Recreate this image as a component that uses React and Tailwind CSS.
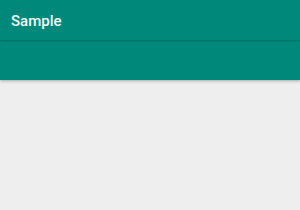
export default function App() {
  return (
    <div className="w-[300px] h-[210px] bg-[#eeeeee] overflow-hidden" style={{ fontFamily: "Roboto, 'Noto Sans', sans-serif" }}>
      <div className="bg-[#00897b] shadow-[0_1px_3px_rgba(0,0,0,0.3)] relative">
        <div className="h-[40px] flex items-center pl-[11px] pt-[2px] relative z-10 bg-[#00897b] shadow-[0_1px_2px_rgba(0,0,0,0.22)]">
          <span className="text-[#f2fbfa] text-[15px] font-medium leading-none">Sample</span>
        </div>
        <div className="h-[40px]"></div>
      </div>
    </div>
  );
}
